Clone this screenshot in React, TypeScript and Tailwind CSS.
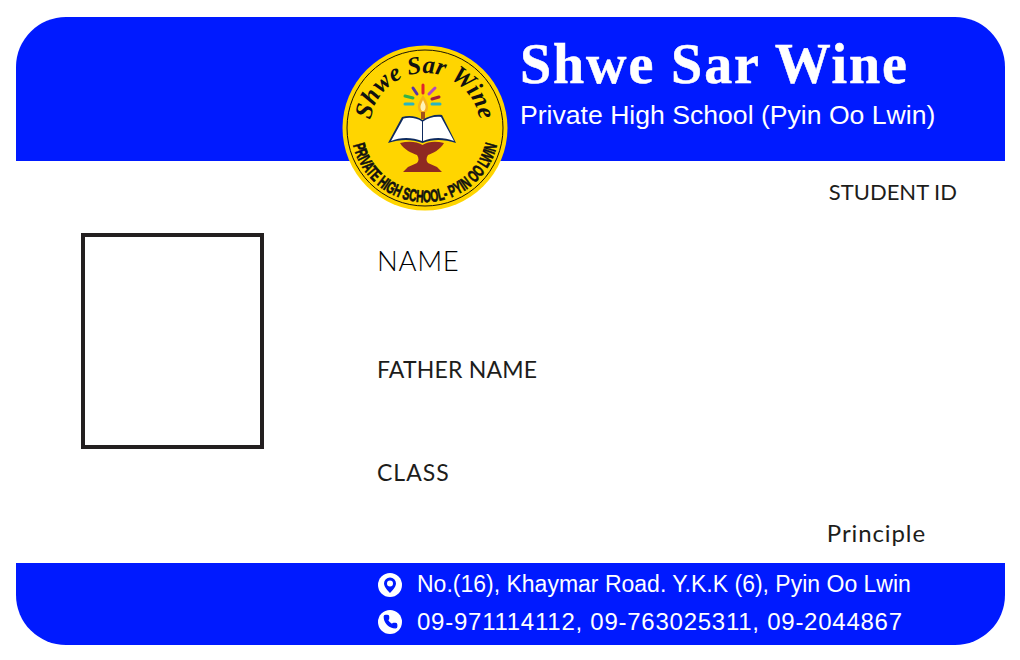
import { Phone } from "lucide-react";

function Logo() {
  return (
    <svg viewBox="0 0 166 166" className="absolute left-[326px] top-[28px] h-[166px] w-[166px]">
      <defs>
        <path id="topArc" d="M 28 83 A 55 55 0 1 1 138 83" />
        <path id="bottomArc" d="M 9.7 93.3 A 74 74 0 0 0 156.3 93.3" />
      </defs>
      <circle cx="83" cy="83" r="82.5" fill="#ffd500" />
      <circle cx="83" cy="83" r="78" fill="none" stroke="#1b1405" strokeWidth="1" />
      <text className="font-['Liberation_Serif',serif]" fontSize="25" fontStyle="italic" fontWeight="700" fill="#111">
        <textPath href="#topArc" startOffset="50%" textAnchor="middle" textLength="156">Shwe Sar Wine</textPath>
      </text>
      <text className="font-['Liberation_Sans',sans-serif]" fontSize="17" fontWeight="700" fill="#111" stroke="#111" strokeWidth="0.7">
        <textPath href="#bottomArc" startOffset="50%" textAnchor="middle" textLength="198" lengthAdjust="spacingAndGlyphs">PRIVATE HIGH SCHOOL- PYIN OO LWIN</textPath>
      </text>
      {/* rays */}
      <g strokeWidth="3" strokeLinecap="round">
        <path d="M81 40 V48" stroke="#e0262b" />
        <path d="M71 43 L75 49" stroke="#5a35a8" />
        <path d="M93 43 L87 49" stroke="#b24ac0" />
        <path d="M63 51 L71 53" stroke="#33b24a" />
        <path d="M90 54 L97 52" stroke="#a31d3a" />
        <path d="M63 59 H71" stroke="#27b5c4" />
        <path d="M90 59 H98" stroke="#27b5c4" />
      </g>
      {/* flame */}
      <path d="M81 50 C84 55 86.500 59 86 63 C85.500 67 83.500 68 81 68 C78.500 68 76.500 67 76 63 C75.500 59 78 55 81 50 Z" fill="#f6b21c" />
      <path d="M81 55 C82.500 58 84 60.500 83.500 63 C83 65.500 82 66 81 66 C80 66 79 65.500 78.500 63 C78 60.500 79.500 58 81 55 Z" fill="#fff3b5" />
      <rect x="79" y="67" width="4" height="7" fill="#a2521c" />
      {/* book */}
      <path d="M46 98 L60 72 C67 70 75 71 80.500 75 C86 71 94 69 100 70 L114 98 C102 94 90 94 80.500 98 C70 94 58 94 46 98 Z" fill="#0e2a5e" />
      <path d="M49 96 L61.500 73.500 C68 72 75 73 80 76.500 L80 96 C70 92 58 92 49 96 Z" fill="#ffffff" />
      <path d="M112 96 L99 72 C93 71 86 73 81 76.500 L81 96 C90 92 102 92 112 96 Z" fill="#ffffff" />
      {/* stand */}
      <path d="M58 98 C66 96 74 96 80.500 100 C87 96 94 96 102 98 C98 105 91 108 86 110 C84 113 84 116 86 118 L95 122 L100 127 H61 L66 122 L75 118 C77 116 77 113 75 110 C70 108 62 105 58 98 Z" fill="#8e2a22" />
    </svg>
  );
}

export default function App() {
  return (
    <div className="h-[660px] w-[1020px] bg-white pl-4 pt-[17px]">
      <div className="relative flex h-[628px] w-[989px] flex-col overflow-hidden rounded-[50px]">
        <header className="h-[144px] bg-[#001aff] pl-[504px] pt-[14px] text-white">
          <h1 className="font-['Liberation_Serif',serif] text-[56px] font-bold leading-[66px] tracking-[1.9px] [-webkit-text-stroke:0.5px_white]">Shwe Sar Wine</h1>
          <p className="mt-[1px] font-['Liberation_Sans',sans-serif] text-[26.6px] leading-[34px]">Private High School (Pyin Oo Lwin)</p>
        </header>

        <main className="flex flex-1 bg-white text-[#1d1d1b]">
          <div className="w-[361px] pl-[65px] pt-[72px]">
            <div className="h-[216px] w-[183px] border-4 border-[#231f20]" />
          </div>
          <div className="flex flex-1 flex-col font-['Lato',sans-serif]">
            <p className="self-end pr-[48px] pt-[17px] text-[22px] leading-[28px]">STUDENT ID</p>
            <p className="mt-[38px] text-[27.5px] font-light leading-[34px] tracking-[0.7px] text-black">NAME</p>
            <p className="mt-[77px] text-[23px] leading-[29px] tracking-[0.2px]">FATHER NAME</p>
            <p className="mt-[74px] text-[23px] leading-[28px] tracking-[1px]">CLASS</p>
            <p className="mt-[32px] self-end pr-[79px] text-[24px] leading-[29px] tracking-[0.9px]">Principle</p>
          </div>
        </main>

        <footer className="flex h-[82px] flex-col gap-[8px] bg-[#001aff] pl-[362px] pt-[7px] font-['Liberation_Sans',sans-serif] leading-[29px] text-white">
          <div className="flex items-center gap-[15px]">
            <svg viewBox="0 0 24 24" className="h-[24px] w-[24px]">
              <circle cx="12" cy="12" r="12" fill="white" />
              <path d="M12 4.500a6 6 0 0 0-6 6c0 4 6 9.500 6 9.500s6-5.500 6-9.500a6 6 0 0 0-6-6z" fill="#001aff" />
              <circle cx="12" cy="10.500" r="3" fill="white" />
            </svg>
            <span className="text-[23px]">No.(16), Khaymar Road. Y.K.K (6), Pyin Oo Lwin</span>
          </div>
          <div className="flex items-center gap-[15px]">
            <span className="flex h-[24px] w-[24px] items-center justify-center rounded-full bg-white">
              <Phone className="h-[15px] w-[15px] fill-[#001aff] text-[#001aff]" />
            </span>
            <span className="text-[24px] tracking-[0.75px]">09-971114112, 09-763025311, 09-2044867</span>
          </div>
        </footer>

        <Logo />
      </div>
    </div>
  );
}
